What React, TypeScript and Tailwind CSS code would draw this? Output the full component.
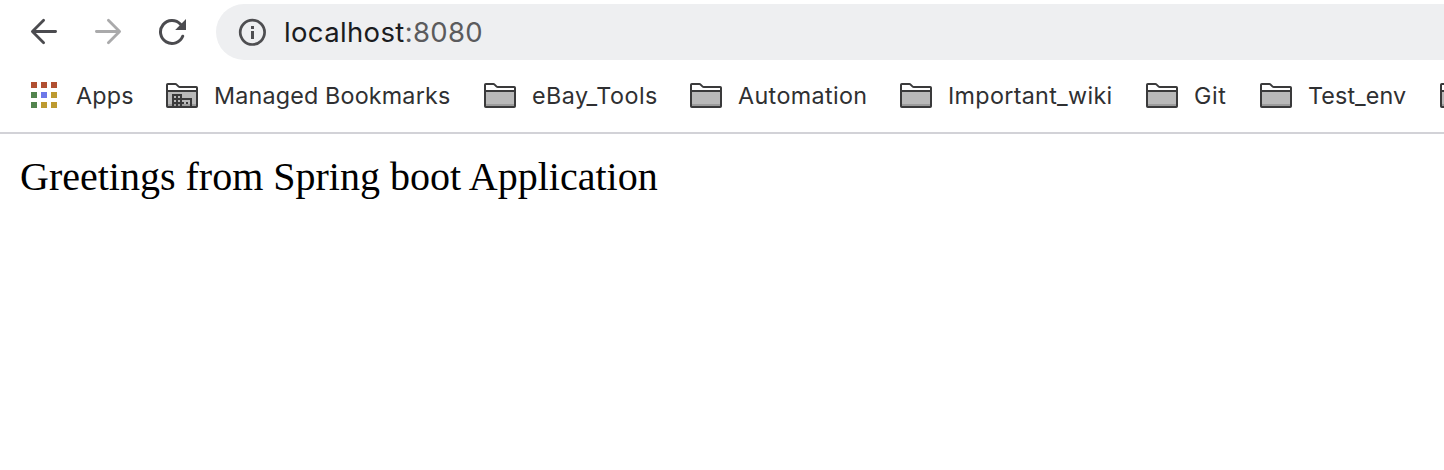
import React from "react";

function Folder({ managed = false }: { managed?: boolean }) {
  return (
    <svg width="32" height="26" viewBox="0 0 32 26" className="shrink-0">
      <path d="M1 7.5H31V24H1Z" fill="#b9b9b9" />
      <path d="M2 21H30V23H2Z" fill="#9c9c9c" />
      <path
        d="M1 23.2V1.8Q1 1 1.8 1H9.4Q10 1 10.6 1.6L12.4 3.4Q13 4 13.8 4H30.2Q31 4 31 4.8V23.2Q31 24 30.2 24H1.8Q1 24 1 23.2Z"
        fill="none"
        stroke="#3a3a3b"
        strokeWidth="2"
      />
      <path d="M1 8H31" stroke="#3a3a3b" strokeWidth="2" />
      {managed && (
        <g fill="none" stroke="#3a3a3b">
          <path d="M7 23V12H15V23M11 12V23M7 16H15M7 20H15M15 16H25V23" strokeWidth="2" />
          <path d="M16 20H18M20 20H22" strokeWidth="2" />
        </g>
      )}
    </svg>
  );
}

const tiles = [
  "bg-[#b15032]", "bg-[#b15032]", "bg-[#b15032]",
  "bg-[#53844e]", "bg-[#6d78e8]", "bg-[#bd9a31]",
  "bg-[#53844e]", "bg-[#bd9a31]", "bg-[#bd9a31]",
];

const bookmarks = [
  { label: "Managed Bookmarks", item: "w-[318px]", text: "tracking-[0.18px]", managed: true },
  { label: "eBay_Tools", item: "w-[206px]", text: "tracking-[0.45px]" },
  { label: "Automation", item: "w-[210px]", text: "tracking-[0.38px]" },
  { label: "Important_wiki", item: "w-[246px]", text: "tracking-[0.32px]" },
  { label: "Git", item: "w-[114px]", text: "tracking-[0.6px]" },
  { label: "Test_env", item: "w-[180px]", text: "tracking-[0.1px]" },
  { label: "", item: "w-[48px]", text: "" },
];

export default function App() {
  return (
    <div className="h-[470px] w-full overflow-hidden bg-white">
      <div className="flex h-[60px] pt-1">
        <div className="flex w-[216px] shrink-0 items-center pl-[30px]">
          <svg width="28" height="28" viewBox="0 0 28 28" fill="none" stroke="#4b4b4f" strokeWidth="2.8" strokeLinecap="round" strokeLinejoin="round">
            <path d="M25.6 13.5H3M13.6 2.2L2.4 13.5L13.6 24.8" />
          </svg>
          <svg width="28" height="28" viewBox="0 0 28 28" fill="none" stroke="#aaaaab" strokeWidth="2.8" strokeLinecap="round" strokeLinejoin="round" className="ml-9">
            <path d="M2.4 13.5H25M14.4 2.2L25.6 13.5L14.4 24.8" />
          </svg>
          <svg width="28" height="28" viewBox="0 0 28 28" className="ml-9">
            <path d="M22.5 6.2A11.5 11.5 0 1 0 24.7 18.2" fill="none" stroke="#4b4b4f" strokeWidth="3" strokeLinecap="round" />
            <path d="M28 1V12H17.2Z" fill="#4b4b4f" />
          </svg>
        </div>
        <div className="flex h-14 flex-1 items-center rounded-l-full bg-[#eeeff1] pl-[22px] font-['Inter',sans-serif] text-[27.5px] leading-none text-[#1b1c1f]">
          <svg width="29" height="28" viewBox="0 0 29 28" className="mr-[17px] shrink-0">
            <circle cx="14.4" cy="14.3" r="12.2" fill="none" stroke="#4e4e51" strokeWidth="2.7" />
            <path d="M13 8H16V11H13ZM13 13H16V21H13Z" fill="#4e4e51" />
          </svg>
          <span className="whitespace-nowrap pt-0.5 tracking-[0.35px]">
            localhost<span className="text-[#5b5b5d]">:8080</span>
          </span>
        </div>
      </div>
      <div className="flex h-[74px] border-b-2 border-[#d2d2d7] font-['Inter',sans-serif] text-[23.3px] leading-none text-[#2f3032]">
        <div className="flex w-[166px] shrink-0 items-center pl-[31px]">
          <div className="mb-0.5 grid shrink-0 grid-cols-3 gap-1">
            {tiles.map((color, i) => (
              <span key={i} className={`size-1.5 ${color}`} />
            ))}
          </div>
          <span className="ml-[19px] tracking-[0.2px]">Apps</span>
        </div>
        {bookmarks.map((b) => (
          <div key={b.label} className={`flex shrink-0 items-center gap-4 ${b.item}`}>
            <Folder managed={b.managed} />
            <span className={`whitespace-nowrap ${b.text}`}>{b.label}</span>
          </div>
        ))}
      </div>
      <main className="px-5 pt-5 font-['Liberation_Serif',serif] text-[40px] leading-[46px] text-black">
        Greetings from Spring boot Application
      </main>
    </div>
  );
}
